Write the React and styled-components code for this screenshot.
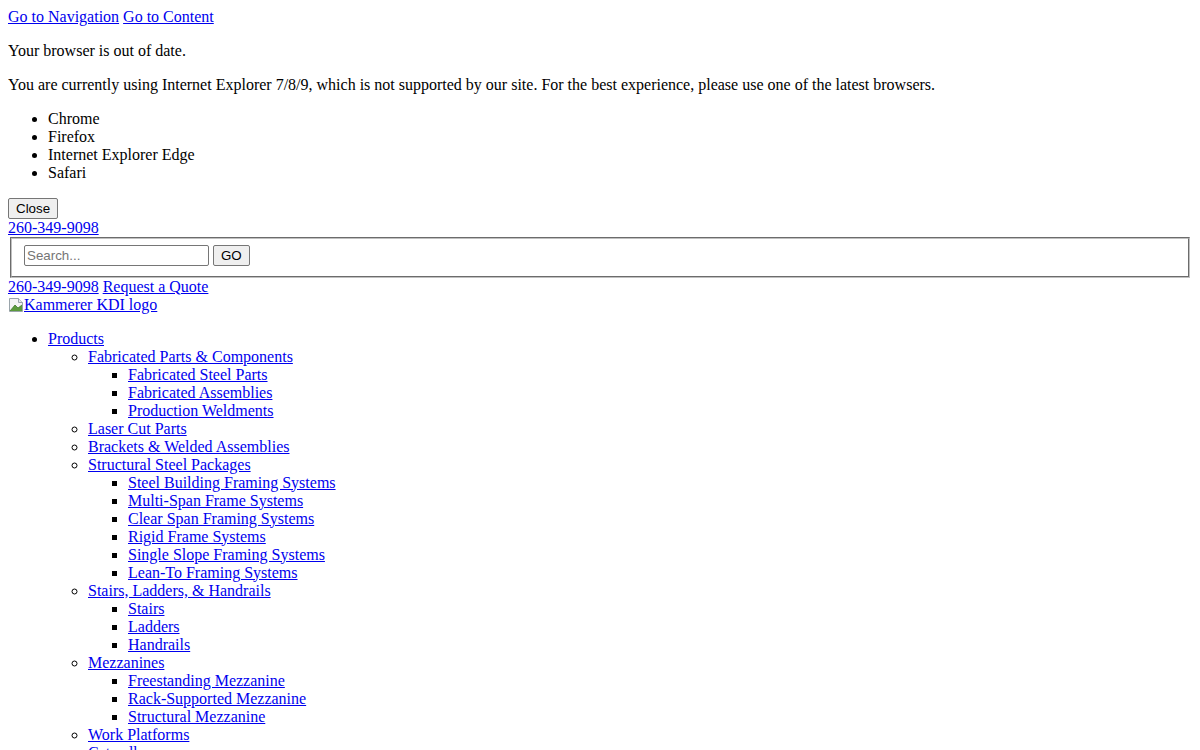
import React from 'react';
import styled, {createGlobalStyle} from 'styled-components';

const GlobalStyle = createGlobalStyle`
	body {
		margin: 8px;
		font-family: 'Liberation Serif', 'Times New Roman', serif;
		font-size: 16px;
		color: #000;
		background: #fff;
	}
	a {
		color: #0000ee;
	}
`

const SkipLinks = styled.div`
	line-height: 18px;
`

const Notice = styled.div`
	line-height: 18px;
`

const Para = styled.p`
	margin: 16px 0;
`

const BrowserList = styled.ul`
	margin: 16px 0;
	padding-left: 40px;
	list-style: disc;
`

const ControlFont = `
	font-family: 'Liberation Sans', Arial, sans-serif;
	font-size: 13.33px;
`

const CloseButton = styled.button`
	${ControlFont}
	box-sizing: border-box;
	height: 21px;
	padding: 0 7px;
	border: 1px solid #767676;
	border-radius: 2px;
	background: #efefef;
	color: #000;
	vertical-align: top;
`

const PhoneLine = styled.div`
	line-height: 18px;
`

const SearchBox = styled.fieldset`
	margin: 0 2px;
	padding: 5.6px 12px 10px;
	border: 2px groove #c0c0c0;
	min-width: min-content;
	line-height: 21px;
`

const SearchInput = styled.input`
	${ControlFont}
	box-sizing: border-box;
	width: 185px;
	height: 21px;
	padding: 1px 2px;
	border: 1px solid #767676;
	border-radius: 2px;
	color: #000;
	vertical-align: top;
	&::placeholder {
		color: #757575;
	}
`

const GoButton = styled(CloseButton)`
	margin-left: 4px;
`

const TopLinks = styled.div`
	line-height: 18px;
`

const LogoLine = styled.div`
	height: 18px;
	line-height: 18px;
`

const LogoLink = styled.a`
	svg {
		vertical-align: -3px;
	}
`

const NavList = styled.ul`
	margin: ${p => (p.$depth === 0 ? '16px 0' : '0')};
	padding-left: 40px;
	list-style: ${p => ['disc', 'circle', 'square'][Math.min(p.$depth, 2)]};
	line-height: 18px;
`

const BrokenImage = () => (
	<svg width="16" height="16" viewBox="0 0 16 16">
		<path d="M1.5 1.5h9l4 4v9h-13z" fill="#f4f4f4" stroke="#9aa4ab" />
		<path d="M10.5 1.5v4h4" fill="#e4e8ea" stroke="#9aa4ab" />
		<path d="M2 14l5-6 3 3 4-3v6z" fill="#5c9a3c" />
		<path d="M2 14l5-6 3 3 4-3" fill="none" stroke="#3f7a2a" strokeWidth="0.8" />
	</svg>
)

const nav = [
	{label: 'Products', children: [
		{label: 'Fabricated Parts & Components', children: [
			{label: 'Fabricated Steel Parts'},
			{label: 'Fabricated Assemblies'},
			{label: 'Production Weldments'},
		]},
		{label: 'Laser Cut Parts'},
		{label: 'Brackets & Welded Assemblies'},
		{label: 'Structural Steel Packages', children: [
			{label: 'Steel Building Framing Systems'},
			{label: 'Multi-Span Frame Systems'},
			{label: 'Clear Span Framing Systems'},
			{label: 'Rigid Frame Systems'},
			{label: 'Single Slope Framing Systems'},
			{label: 'Lean-To Framing Systems'},
		]},
		{label: 'Stairs, Ladders, & Handrails', children: [
			{label: 'Stairs'},
			{label: 'Ladders'},
			{label: 'Handrails'},
		]},
		{label: 'Mezzanines', children: [
			{label: 'Freestanding Mezzanine'},
			{label: 'Rack-Supported Mezzanine'},
			{label: 'Structural Mezzanine'},
		]},
		{label: 'Work Platforms'},
		{label: 'Catwalks'},
	]},
]

const Menu = ({items, depth}) => (
	<NavList $depth={depth}>
		{items.map(item => (
			<li key={item.label}>
				<a href="#">{item.label}</a>
				{item.children && <Menu items={item.children} depth={depth + 1} />}
			</li>
		))}
	</NavList>
)

const App = () => {
	return (
		<>
			<GlobalStyle />
			<SkipLinks>
				<a href="#nav">Go to Navigation</a> <a href="#content">Go to Content</a>
			</SkipLinks>
			<Notice>
				<Para>Your browser is out of date.</Para>
				<Para>You are currently using Internet Explorer 7/8/9, which is not supported by our site. For the best experience, please use one of the latest browsers.</Para>
				<BrowserList>
					<li>Chrome</li>
					<li>Firefox</li>
					<li>Internet Explorer Edge</li>
					<li>Safari</li>
				</BrowserList>
				<CloseButton type="button">Close</CloseButton>
			</Notice>
			<PhoneLine>
				<a href="#">260-349-9098</a>
			</PhoneLine>
			<form onSubmit={e => e.preventDefault()}>
				<SearchBox>
					<SearchInput type="text" placeholder="Search..." />
					<GoButton type="submit">GO</GoButton>
				</SearchBox>
			</form>
			<TopLinks>
				<a href="#">260-349-9098</a> <a href="#">Request a Quote</a>
			</TopLinks>
			<LogoLine>
				<LogoLink href="#">
					<BrokenImage />
					Kammerer KDI logo
				</LogoLink>
			</LogoLine>
			<nav id="nav">
				<Menu items={nav} depth={0} />
			</nav>
		</>
	)
}

export default App
